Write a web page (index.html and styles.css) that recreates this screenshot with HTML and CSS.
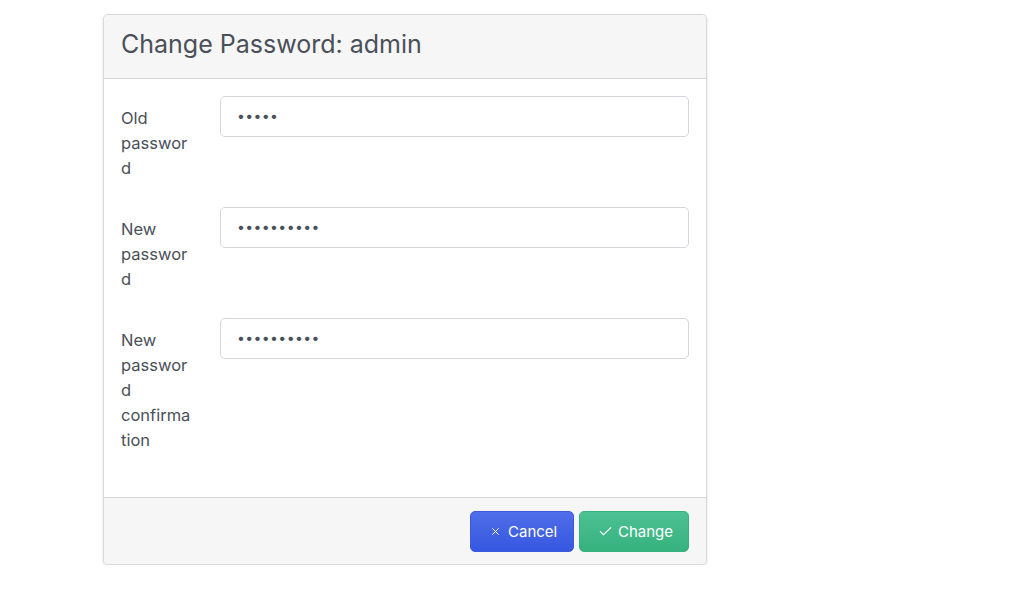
FILE: index.html
```html
<!DOCTYPE html>
<html>
<head>
<meta charset="utf-8">
<link rel="stylesheet" href="styles.css">
</head>
<body>
<div class="page">
  <div class="card">
    <div class="card-header"><h1 class="title">Change Password: admin</h1></div>
    <div class="card-body">
      <div class="row">
        <label class="label">Old password</label>
        <div class="input">•••••</div>
      </div>
      <div class="row">
        <label class="label">New password</label>
        <div class="input">••••••••••</div>
      </div>
      <div class="row">
        <label class="label">New password confirmation</label>
        <div class="input">••••••••••</div>
      </div>
    </div>
    <div class="card-footer">
      <button class="btn btn-cancel"><svg class="ico" viewBox="0 0 10 10" width="9" height="9"><path d="M1.5 1.5L8.5 8.5M8.5 1.5L1.5 8.5" stroke="#fff" stroke-width="1.1" fill="none"/></svg>Cancel</button>
      <button class="btn btn-change"><svg class="ico" viewBox="0 0 14 10" width="13" height="10"><path d="M1 5.2L4.8 9L13 1" stroke="#fff" stroke-width="1.2" fill="none"/></svg>Change</button>
    </div>
  </div>
</div>
</body>
</html>
```
FILE: styles.css
```css
* { box-sizing: border-box; }
html, body { margin: 0; padding: 0; background: #fff; }
body { font-family: Inter, "Noto Sans", sans-serif; color: #4a5059; }
.page { padding: 14px 0 0 103px; }
.card {
  width: 604px;
  border: 1px solid #d9d9d9;
  border-radius: 5px;
  background: #fff;
  box-shadow: 0 1px 3px rgba(0,0,0,0.12);
  overflow: hidden;
}
.card-header {
  background: #f6f6f6;
  border-bottom: 1px solid #d6d6d6;
  height: 64px;
  padding: 0 17px;
  display: flex;
  align-items: center;
}
.title { margin: 0; font-size: 25px; font-weight: 400; color: #4a5059; padding-bottom: 6px; }
.card-body { padding: 17px 17px 17.5px; }
.row { display: flex; gap: 28px; margin-bottom: 26.5px; }
.label {
  width: 71px;
  flex: none;
  font-size: 16.5px;
  line-height: 25px;
  padding-top: 9.5px;
  overflow-wrap: anywhere;
  color: #4a5059;
}
.input {
  flex: 1;
  height: 41px;
  border: 1px solid #d3d6db;
  border-radius: 5px;
  padding: 0 16px;
  font-size: 14px;
  line-height: 38px;
  letter-spacing: 0.4px;
  color: #4a5059;
}
.card-footer {
  background: #f6f6f6;
  border-top: 1px solid #d6d6d6;
  padding: 13px 17px 12px;
  display: flex;
  justify-content: flex-end;
  gap: 5px;
}
.btn {
  height: 41px;
  border: none;
  border-radius: 5px;
  color: #fff;
  font-family: Inter, "Noto Sans", sans-serif;
  font-size: 15px;
  display: flex;
  align-items: center;
  gap: 8px;
  padding: 0 14px 0 20px;
}
.btn-cancel { width: 104px; background: linear-gradient(#4f6ee9, #3657e0); border: 1px solid #3a5bdc; }
.btn-change { width: 110px; background: linear-gradient(#4dc194, #35b27d); border: 1px solid #36b27e; padding-left: 19px; gap: 6px; }
.ico { flex: none; }
```
